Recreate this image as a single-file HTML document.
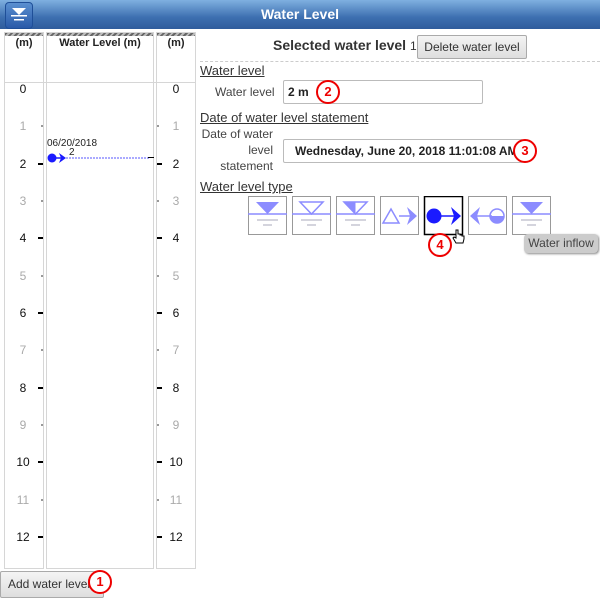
<!DOCTYPE html>
<html><head><style>
body{margin:0;width:600px;height:600px;position:relative;overflow:hidden;background:#fff;font-family:"Liberation Sans",sans-serif;font-size:12px;color:#222}
.a{position:absolute}
.title{left:0;top:0;width:600px;height:29px;background:linear-gradient(#7fb0e0,#3d6fb0 60%,#2f5c9c);color:#fff;font-weight:bold;font-size:14px;text-align:center;line-height:29px}
.col{border:1px solid #d6d6d6;background:#fff}
.hatch{height:3px;background:repeating-linear-gradient(135deg,#666 0 2px,#bbb 2px 4px)}
.num{width:40px;text-align:center;font-size:12px}
.btn{border:1px solid #aaa;border-radius:2px;background:linear-gradient(#f4f4f4,#dedede);font-size:12px;color:#333}
.circ{width:20px;height:20px;border:2px solid #e00;border-radius:50%;color:#e00;font-weight:bold;font-size:13px;text-align:center;line-height:20px;background:#fff}
.u{text-decoration:underline;font-size:13px;color:#333}
</style></head><body>
<div class="a title">Water Level</div>
<div class="a" style="left:5px;top:2px;width:26px;height:25px;border-radius:4px;background:linear-gradient(#5a8fd0,#2a5aa8);border:1px solid #1f4f98">
<svg width="26" height="25"><polygon points="6,5 20,5 13,12" fill="#fff"/><rect x="5" y="12" width="16" height="1.5" fill="#fff"/><rect x="8" y="16" width="10" height="1.5" fill="#fff"/></svg></div>

<div class="a col" style="left:4px;top:32px;width:38px;height:535px"><div class="hatch"></div></div>
<div class="a col" style="left:46px;top:32px;width:106px;height:535px"><div class="hatch"></div></div>
<div class="a col" style="left:156px;top:32px;width:38px;height:535px"><div class="hatch"></div></div>
<div class="a" style="left:4px;top:82px;width:192px;height:1px;background:#d6d6d6"></div>
<div class="a" style="left:4px;top:37px;width:40px;text-align:center;font-weight:bold;font-size:11px">(m)</div>
<div class="a" style="left:46px;top:37px;width:108px;text-align:center;font-weight:bold;font-size:11px">Water Level (m)</div>
<div class="a" style="left:156px;top:37px;width:40px;text-align:center;font-weight:bold;font-size:11px">(m)</div>

<div id="sc"></div>
<script>
var h='';for(var n=0;n<=12;n++){var y=88+n*37.33;var odd=n%2;var c=odd?'#aaa':'#111';
h+='<div class="a num" style="left:3px;top:'+(y-6)+'px;color:'+c+'">'+n+'</div>';
h+='<div class="a num" style="left:156px;top:'+(y-6)+'px;color:'+c+'">'+n+'</div>';
if(n>0){if(odd){h+='<div class="a" style="left:41px;top:'+(y)+'px;width:2px;height:2px;background:#999"></div><div class="a" style="left:157px;top:'+(y)+'px;width:2px;height:2px;background:#999"></div>';}
else{h+='<div class="a" style="left:38px;top:'+(y)+'px;width:5px;height:2px;background:#000"></div><div class="a" style="left:157px;top:'+(y)+'px;width:5px;height:2px;background:#000"></div>';}}}
document.getElementById('sc').innerHTML=h;
</script>
<div class="a" style="left:47px;top:138px;font-size:10px">06/20/2018</div>
<div class="a" style="left:69px;top:147px;font-size:10px">2</div>
<svg class="a" style="left:46px;top:150px" width="110" height="16"><circle cx="6" cy="8" r="4.5" fill="#1a1aff"/><line x1="6" y1="8" x2="16" y2="8" stroke="#1a1aff" stroke-width="1.5"/><polygon points="13,3 20,8 13,13 15,8" fill="#1a1aff"/><line x1="20" y1="8" x2="104" y2="8" stroke="#55f" stroke-dasharray="2,1"/><line x1="102" y1="7.5" x2="108" y2="7.5" stroke="#000"/></svg>

<div class="a btn" style="left:0;top:571px;width:95px;height:25px;line-height:25px;padding-left:7px">Add water level</div>
<div class="a circ" style="left:88px;top:570px">1</div>

<div class="a" style="left:273px;top:37px;font-weight:bold;font-size:14px;color:#333">Selected water level <span style="font-size:12px;font-weight:normal">1</span></div>
<div class="a btn" style="left:417px;top:35px;width:108px;height:22px;line-height:22px;text-align:center">Delete water level</div>
<div class="a" style="left:200px;top:61px;width:400px;border-top:1px dashed #ccc"></div>
<div class="a u" style="left:200px;top:63px">Water level</div>
<div class="a" style="left:215px;top:85px;color:#444">Water level</div>
<div class="a" style="left:283px;top:80px;border:1px solid #bbb;border-radius:2px;font-weight:bold;line-height:22px;padding-left:4px;box-sizing:border-box;width:200px;height:24px">2 m</div>
<div class="a circ" style="left:316px;top:80px">2</div>
<div class="a u" style="left:200px;top:110px">Date of water level statement</div>
<div class="a" style="left:198px;top:126px;width:75px;text-align:right;color:#444;line-height:16px">Date of water<br>level<br>statement</div>
<div class="a" style="left:283px;top:139px;width:240px;height:24px;border:1px solid #bbb;border-radius:2px;box-sizing:border-box;font-weight:bold;line-height:22px;padding-left:11px">Wednesday, June 20, 2018 11:01:08 AM</div>
<div class="a circ" style="left:513px;top:139px">3</div>
<div class="a u" style="left:200px;top:179px">Water level type</div>

<svg class="a" style="left:248px;top:196px" width="306" height="40">
<g fill="none">
<rect x="0.5" y="0.5" width="38" height="38" stroke="#999"/>
<polygon points="8,6 31,6 19.5,18" fill="#8c8cff"/><line x1="0" y1="18" x2="39" y2="18" stroke="#8c8cff" stroke-width="1.5"/><line x1="9" y1="24" x2="30" y2="24" stroke="#aab" /><line x1="15" y1="29" x2="24" y2="29" stroke="#aab"/>
<g transform="translate(44,0)"><rect x="0.5" y="0.5" width="38" height="38" stroke="#999"/><polygon points="8,6 31,6 19.5,18" stroke="#8c8cff" stroke-width="1.5"/><line x1="0" y1="18" x2="39" y2="18" stroke="#8c8cff" stroke-width="1.5"/><line x1="9" y1="24" x2="30" y2="24" stroke="#aab"/><line x1="15" y1="29" x2="24" y2="29" stroke="#aab"/></g>
<g transform="translate(88,0)"><rect x="0.5" y="0.5" width="38" height="38" stroke="#999"/><polygon points="8,6 31,6 19.5,18" stroke="#8c8cff" stroke-width="1.5"/><polygon points="8,6 19.5,6 19.5,18" fill="#8c8cff"/><line x1="0" y1="18" x2="39" y2="18" stroke="#8c8cff" stroke-width="1.5"/><line x1="9" y1="24" x2="30" y2="24" stroke="#aab"/><line x1="15" y1="29" x2="24" y2="29" stroke="#aab"/></g>
<g transform="translate(132,0)"><rect x="0.5" y="0.5" width="38" height="38" stroke="#999"/><polygon points="3,27 11,13 19,27" stroke="#8c8cff" stroke-width="1.5"/><line x1="19" y1="20" x2="30" y2="20" stroke="#8c8cff" stroke-width="1.5"/><polygon points="27,11 37,20 27,29 30,20" fill="#8c8cff"/></g>
<g transform="translate(176,0)"><rect x="0.5" y="0.5" width="38" height="38" stroke="#000" stroke-width="1.5" fill="#fff"/><circle cx="10" cy="20" r="7.5" fill="#1a1aff"/><line x1="10" y1="20" x2="30" y2="20" stroke="#1a1aff" stroke-width="1.5"/><polygon points="27,11 37,20 27,29 30,20" fill="#1a1aff"/></g>
<g transform="translate(220,0)"><rect x="0.5" y="0.5" width="38" height="38" stroke="#999"/><polygon points="12,11 2,20 12,29 9,20" fill="#8c8cff"/><line x1="8" y1="20" x2="24" y2="20" stroke="#8c8cff" stroke-width="1.5"/><circle cx="29" cy="20" r="7" stroke="#8c8cff" stroke-width="1.5"/><path d="M22,20 A7,7 0 0 0 36,20 Z" fill="#8c8cff"/></g>
<g transform="translate(264,0)"><rect x="0.5" y="0.5" width="38" height="38" stroke="#999"/><polygon points="8,6 31,6 19.5,18" fill="#8c8cff"/><line x1="0" y1="18" x2="39" y2="18" stroke="#8c8cff" stroke-width="1.5"/><line x1="9" y1="24" x2="30" y2="24" stroke="#aab"/><line x1="15" y1="29" x2="24" y2="29" stroke="#aab"/></g>
</g></svg>
<div class="a circ" style="left:428px;top:233px">4</div>
<svg class="a" style="left:452px;top:229px" width="14" height="16"><path d="M4,1 v8 l-2,-1 l-1,1 l3,5 h7 l1,-4 v-3 h-2 v-1 h-2 v-1 h-2 v-4 z" fill="#fff" stroke="#000"/></svg>
<div class="a" style="left:524px;top:234px;width:74px;height:19px;background:#ccc;border-radius:4px;box-shadow:1px 1px 2px #888;line-height:19px;text-align:center;color:#444">Water inflow</div>
</body></html>
